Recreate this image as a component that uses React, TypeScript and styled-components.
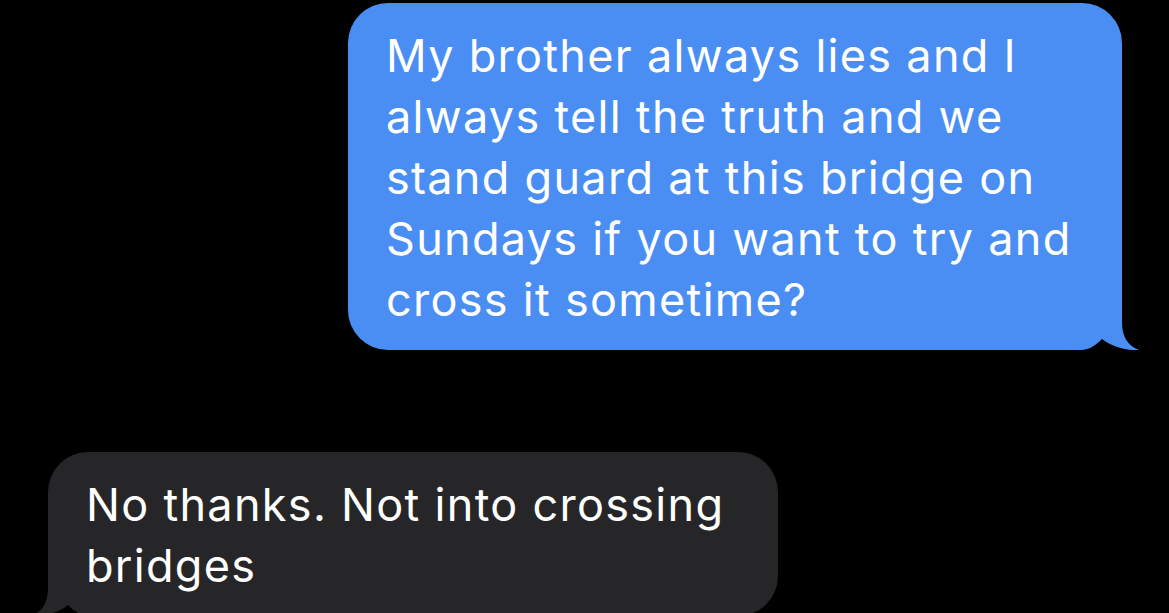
import React from "react";
import styled, { createGlobalStyle } from "styled-components";

const Global = createGlobalStyle`
  html, body {
    margin: 0;
    padding: 0;
    background: #000;
    overflow: hidden;
  }
  body {
    font-family: Inter, "Noto Sans", "Liberation Sans", sans-serif;
  }
`;

const Screen = styled.div`
  width: 1169px;
  height: 613px;
  background: #000;
  overflow: hidden;
  display: flex;
  flex-direction: column;
  padding-top: 3px;
  box-sizing: border-box;
`;

const Row = styled.div<{ $side: "left" | "right" }>`
  display: flex;
  justify-content: ${(p) => (p.$side === "right" ? "flex-end" : "flex-start")};
  padding: ${(p) => (p.$side === "right" ? "0 47px 0 0" : "0 0 0 48px")};
  margin-bottom: ${(p) => (p.$side === "right" ? "102px" : "0")};
`;

const Bubble = styled.div<{ $sent: boolean; $width: number }>`
  position: relative;
  box-sizing: border-box;
  width: ${(p) => p.$width}px;
  padding: 22px 38px 20px 38px;
  border-radius: 40px;
  background: ${(p) => (p.$sent ? "#4a8ef4" : "#262628")};
  color: #fff;
  font-size: 45px;
  line-height: 61px;
  letter-spacing: 1.3px;
  font-weight: 400;
`;

const Line = styled.span`
  display: block;
  white-space: nowrap;
`;

const Tail = styled.svg<{ $side: "left" | "right" }>`
  position: absolute;
  bottom: 0;
  width: 58px;
  height: 50px;
  ${(p) => (p.$side === "right" ? "right: -18px;" : "left: -18px; transform: scaleX(-1);")}
`;

function BubbleTail({ side, color }: { side: "left" | "right"; color: string }) {
  return (
    <Tail $side={side} viewBox="0 0 58 50" aria-hidden="true">
      <rect x="0" y="0" width="58" height="50" fill="#000" />
      <path
        d="M -1 0 H 40 V 22 C 40 37 46 46 57 50 C 45 51 30 47 20 39 C 14 45 8 49.5 -1 50 Z"
        fill={color}
      />
    </Tail>
  );
}

export default function App() {
  return (
    <>
      <Global />
      <Screen>
        <Row $side="right">
          <Bubble $sent $width={774}>
            <Line>My brother always lies and I</Line>
            <Line>always tell the truth and we</Line>
            <Line>stand guard at this bridge on</Line>
            <Line>Sundays if you want to try and</Line>
            <Line>cross it sometime?</Line>
            <BubbleTail side="right" color="#4a8ef4" />
          </Bubble>
        </Row>
        <Row $side="left">
          <Bubble $sent={false} $width={730}>
            <Line>No thanks. Not into crossing</Line>
            <Line>bridges</Line>
            <BubbleTail side="left" color="#262628" />
          </Bubble>
        </Row>
      </Screen>
    </>
  );
}
